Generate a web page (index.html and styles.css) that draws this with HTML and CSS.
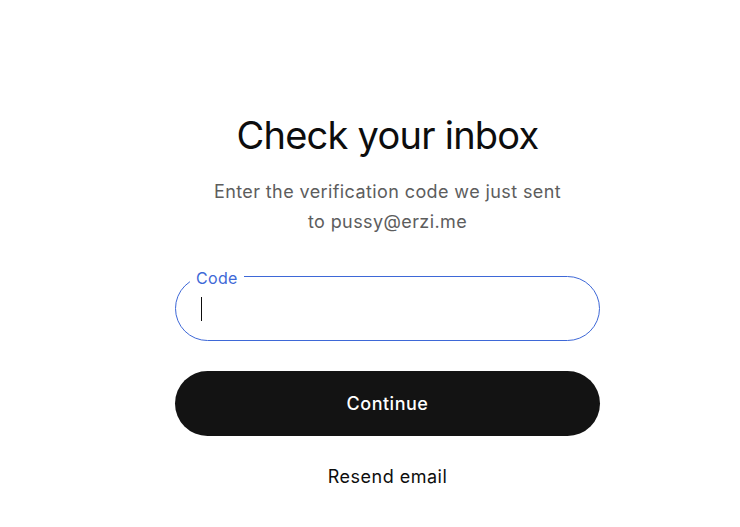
FILE: index.html
```html
<!DOCTYPE html>
<html lang="en">
<head>
    <meta charset="UTF-8">
    <meta name="viewport" content="width=device-width, initial-scale=1.0">
    <title>Check your inbox</title>
    <link rel="stylesheet" href="styles.css">
</head>
<body>
    <main class="page">
        <section class="card">
            <h1>Check your inbox</h1>
            <p class="subtitle">Enter the verification code we just sent to pussy@erzi.me</p>

            <form class="form" onsubmit="return false;">
                <div class="field">
                    <label for="code">Code</label>
                    <input type="text" id="code" autocomplete="one-time-code">
                    <span class="caret"></span>
                </div>
                <button type="submit" class="btn-continue">Continue</button>
            </form>

            <button type="button" class="btn-resend">Resend email</button>
        </section>
    </main>
</body>
</html>
```

FILE: styles.css
```css
body {
    margin: 0;
    padding: 0;
    background-color: #fff;
    color: #0d0d0d;
    font-family: Inter, "Noto Sans", sans-serif;
}

.page {
    padding: 0 0 0 35px;
}

.card {
    width: 425px;
    margin: 0 auto;
    padding-top: 113px;
    text-align: center;
}

h1 {
    margin: 0;
    font-size: 38px;
    font-weight: 400;
    line-height: 44px;
    letter-spacing: -0.75px;
}

.subtitle {
    width: 352px;
    margin: 20px auto 0;
    font-size: 18px;
    line-height: 30px;
    letter-spacing: 0.4px;
    color: #5d5d5d;
}

.form {
    margin-top: 39px;
}

.field {
    position: relative;
}

.field label {
    position: absolute;
    top: -7px;
    left: 15px;
    padding: 0 6px;
    background-color: #fff;
    font-size: 16px;
    line-height: 18px;
    letter-spacing: 0.3px;
    color: #3e68d7;
}

.field input {
    display: block;
    width: 100%;
    height: 65px;
    padding: 0 26px;
    box-sizing: border-box;
    border: 1px solid #3e68d7;
    border-radius: 33px;
    font-family: inherit;
    font-size: 18px;
    color: #0d0d0d;
    caret-color: #0d0d0d;
    outline: none;
}

.caret {
    position: absolute;
    top: 21px;
    left: 26px;
    width: 1px;
    height: 24px;
    background-color: #0d0d0d;
    pointer-events: none;
}

.btn-continue {
    display: block;
    width: 100%;
    height: 65px;
    margin-top: 30px;
    border: none;
    border-radius: 33px;
    background-color: #131313;
    color: #fff;
    font-family: inherit;
    font-size: 18px;
    font-weight: 500;
    letter-spacing: 0.5px;
    cursor: pointer;
}

.btn-resend {
    margin-top: 24px;
    padding: 6px 10px;
    border: none;
    background: none;
    color: #0d0d0d;
    font-family: inherit;
    font-size: 18px;
    letter-spacing: 0.5px;
    cursor: pointer;
}
```
